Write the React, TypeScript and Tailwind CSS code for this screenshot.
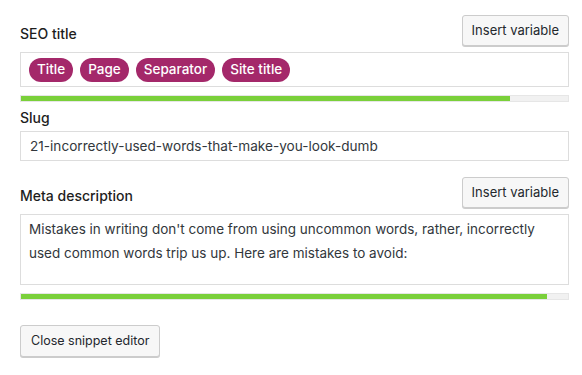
const font = { fontFamily: "Inter, 'Noto Sans', sans-serif" };

function InsertButton() {
  return (
    <button className="h-[31px] rounded-[3px] border border-[#cccccc] bg-[#f7f7f7] px-[9px] text-[13px] text-[#23282d] shadow-[0_1px_0_#cccccc]">
      Insert variable
    </button>
  );
}

function Pill({ label }: { label: string }) {
  return (
    <span className="flex h-6 items-center rounded-full bg-[#a4286a] px-[8px] text-[13.5px] font-medium text-white">
      {label}
    </span>
  );
}

function Progress({ value }: { value: number }) {
  return (
    <div className="h-[7px] w-full border border-[#e6e6e6] bg-[#f1f1f1]">
      <div className="h-full bg-[#7ad03a]" style={{ width: `${value}%` }} />
    </div>
  );
}

export default function App() {
  return (
    <div className="h-[375px] w-[582px] bg-white pl-5 pr-[13px] text-[#32373c]" style={font}>
      <div className="flex items-end justify-between pt-[15px]">
        <span className="pb-[2px] text-[14px] font-medium text-[#1e1e1e]">SEO title</span>
        <InsertButton />
      </div>
      <div className="mt-[6px] flex h-[35px] items-center gap-[7px] border border-[#dddddd] px-2">
        <Pill label="Title" />
        <Pill label="Page" />
        <Pill label="Separator" />
        <Pill label="Site title" />
      </div>
      <div className="mt-[8px]">
        <Progress value={89.4} />
      </div>
      <div className="mt-[5px] text-[14px] font-medium text-[#1e1e1e]">Slug</div>
      <div className="mt-[3px] flex h-[30px] items-center border border-[#dddddd] px-[9px] text-[13.6px]">
        21-incorrectly-used-words-that-make-you-look-dumb
      </div>
      <div className="mt-[16px] flex items-end justify-between">
        <span className="pb-[2px] text-[14px] font-medium text-[#1e1e1e]">Meta description</span>
        <InsertButton />
      </div>
      <div className="mt-[6px] h-[71px] border border-[#dddddd] px-[8px] pt-[2px] text-[13.5px] leading-6">
        Mistakes in writing don't come from using uncommon words, rather, incorrectly used common words trip us up. Here are mistakes to avoid:
      </div>
      <div className="mt-[8px]">
        <Progress value={96.2} />
      </div>
      <button className="mt-[25px] h-[32px] rounded-[3px] border border-[#cccccc] bg-[#f7f7f7] px-[10px] text-[12.5px] text-[#23282d] shadow-[0_1px_0_#cccccc]">
        Close snippet editor
      </button>
    </div>
  );
}
